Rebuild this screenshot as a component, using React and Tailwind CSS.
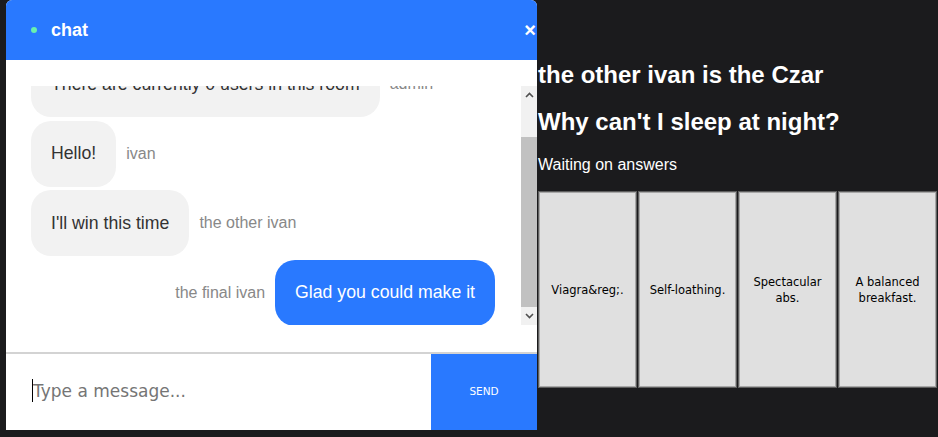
import React from 'react';

const messages = [
  { id: 1, text: 'There are currently 0 users in this room', user: 'admin', mine: false },
  { id: 2, text: 'Hello!', user: 'ivan', mine: false },
  { id: 3, text: "I'll win this time", user: 'the other ivan', mine: false },
  { id: 4, text: 'Glad you could make it', user: 'the final ivan', mine: true },
];

const answers = ['Viagra&reg;.', 'Self-loathing.', 'Spectacular abs.', 'A balanced breakfast.'];

const Chevron = ({ up }) => (
  <svg width="9" height="6" viewBox="0 0 9 6" fill="none" stroke="#505050" strokeWidth="1.6">
    {up ? <path d="M1 5l3.5-3.5L8 5" /> : <path d="M1 1l3.5 3.5L8 1" />}
  </svg>
);

const ChatBubble = ({ message }) => (
  <div className={`flex h-[66px] shrink-0 items-center gap-[10px] ${message.mine ? 'justify-end' : ''}`}>
    {message.mine && <span className="text-[16px] text-[#888888]">{message.user}</span>}
    <div
      className={`flex h-[66px] shrink-0 items-center rounded-[20px] px-5 text-[17.7px] ${
        message.mine ? 'bg-[#2979ff] text-white' : 'bg-[#f2f2f2] text-[#333333]'
      }`}
    >
      {message.text}
    </div>
    {!message.mine && <span className="text-[16px] text-[#888888]">{message.user}</span>}
  </div>
);

const App = () => {
  return (
    <div className="flex h-[437px] w-full bg-[#1b1b1d]" style={{ fontFamily: '"Liberation Sans", Arial, sans-serif' }}>
      {/* Chat widget */}
      <div className="ml-[6px] flex h-[430px] w-[531px] shrink-0 flex-col overflow-hidden rounded-t-[6px] bg-white">
        <div className="flex h-[60px] shrink-0 items-center bg-[#2979ff] pl-[25px] pr-[1px]">
          <div className="h-[6px] w-[6px] rounded-full bg-[#69f0ae]"></div>
          <span className="ml-[14px] text-[18px] font-bold text-white">chat</span>
          <span className="ml-auto text-[20px] font-bold leading-none text-white">×</span>
        </div>

        {/* Messages */}
        <div className="flex h-[292px] shrink-0 flex-col pt-[26px]">
          <div className="flex h-[239px]">
            <div className="flex-1 overflow-hidden">
              <div className="-mt-[35px] flex flex-col gap-[3.5px] pl-[25px] pr-[26px]">
                {messages.map((m) => (
                  <ChatBubble key={m.id} message={m} />
                ))}
              </div>
            </div>
            {/* Scrollbar */}
            <div className="flex w-[16px] flex-col bg-[#f1f1f1]">
              <div className="flex h-[17px] items-center justify-center">
                <Chevron up />
              </div>
              <div className="h-[34px]"></div>
              <div className="flex-1 bg-[#c1c1c1]"></div>
              <div className="flex h-[18px] items-center justify-center">
                <Chevron />
              </div>
            </div>
          </div>
        </div>

        {/* Input */}
        <div className="flex flex-1 border-t-2 border-[#d3d3d3]">
          <div className="relative flex min-w-0 flex-1">
            <input
              className="min-w-0 flex-1 pl-[27px] text-[17px] text-[#333] placeholder-[#757575] outline-none"
              style={{ fontFamily: '"DejaVu Sans", sans-serif' }}
              placeholder="Type a message..."
            />
            <span className="absolute left-[26px] top-[25px] h-[23px] w-[1px] bg-black"></span>
          </div>
          <button
            className="w-[106px] bg-[#2979ff] text-[10.5px] text-white"
            style={{ fontFamily: '"DejaVu Sans", sans-serif' }}
          >
            SEND
          </button>
        </div>
      </div>

      {/* Game area */}
      <div className="flex-1 pl-[1px] pt-[61px] text-white">
        <h2 className="text-[24px] font-bold leading-[27px]">the other ivan is the Czar</h2>
        <h2 className="mt-[20px] text-[24px] font-bold leading-[27px]">Why can't I sleep at night?</h2>
        <p className="mt-[21px] text-[16px] leading-[18px]">Waiting on answers</p>
        <div className="mt-[17px] flex gap-[1px]">
          {answers.map((a) => (
            <div
              key={a}
              className="flex h-[197px] w-[99px] items-center justify-center border border-[#5e5e5e] bg-[#e0e0e0] px-[6px] text-center text-[11.5px] leading-[16px] text-black shadow-[inset_0_0_0_1px_#a8a8a8]"
              style={{ fontFamily: '"DejaVu Sans", sans-serif' }}
            >
              {a}
            </div>
          ))}
        </div>
      </div>
    </div>
  );
};

export default App;
